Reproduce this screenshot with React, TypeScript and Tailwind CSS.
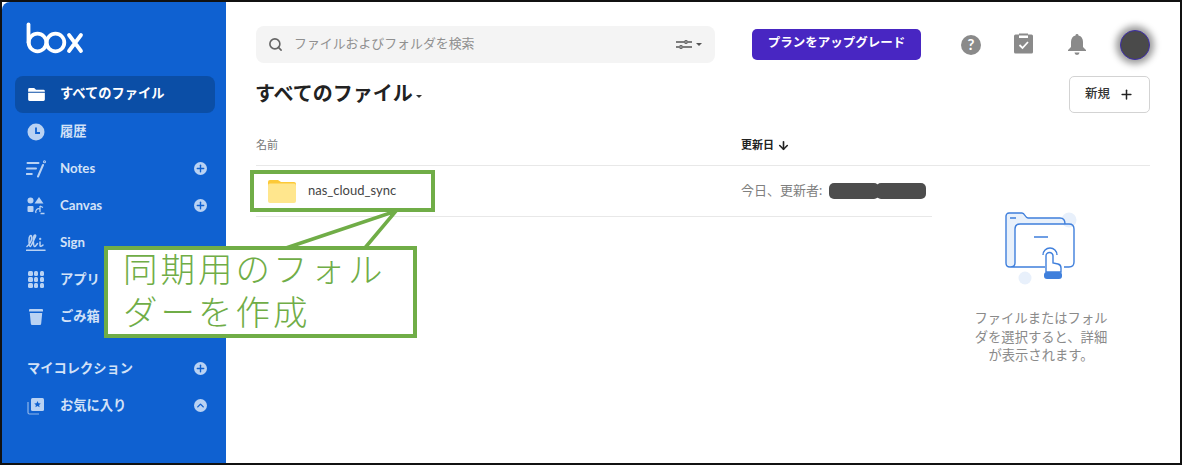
import { Search, ChevronUp, Plus, ArrowDown } from 'lucide-react'
import type { ReactNode } from 'react'

const font = 'font-["Lato","Noto_Sans_CJK_JP","Noto_Sans",sans-serif]'

const BoxLogo = () => (
  <svg width="58" height="32" viewBox="0 0 58 32" fill="none" stroke="#fff" strokeWidth="3.800" strokeLinecap="round">
    <path d="M2.500 2.500v18" />
    <circle cx="11.500" cy="20.500" r="8.800" />
    <circle cx="29.500" cy="20.500" r="8.800" />
    <path d="M43 13l12 16M55 13L43 29" />
  </svg>
)

const FolderIcon = () => (
  <svg width="17" height="13" viewBox="0 0 18 14" fill="#fff">
    <path d="M1.500 0h5l2 2h8A1.500 1.500 0 0 1 18 3.500V4H0V1.500A1.500 1.500 0 0 1 1.500 0Z" />
    <path d="M0 5h18v7.500a1.500 1.500 0 0 1-1.500 1.500h-15A1.500 1.500 0 0 1 0 12.500Z" />
  </svg>
)

const ClockIcon = () => (
  <svg width="18" height="18" viewBox="0 0 18 18">
    <circle cx="9" cy="9" r="8.500" fill="#b9d2f3" />
    <path d="M9 4.500V10h4" fill="none" stroke="#0f61d1" strokeWidth="1.800" />
  </svg>
)

const NotesIcon = () => (
  <svg width="20" height="18" viewBox="0 0 20 18" fill="none" stroke="#b9d2f3" strokeWidth="2" strokeLinecap="round">
    <path d="M1.500 3h11M1 8.500h9M.8 14h5M17 5l-5 11.500" />
    <circle cx="18.500" cy="1.800" r="0.500" />
  </svg>
)

const CanvasIcon = () => (
  <svg width="18" height="18" viewBox="0 0 18 18" fill="#b9d2f3">
    <circle cx="3.500" cy="3.500" r="3" />
    <path d="M12 0l4.500 6.500h-9Z" />
    <rect x="0.500" y="9" width="6" height="6" rx="1" />
    <path d="M9 16a3 3 0 0 1 4-4M13 9v6M13 9l3 1.500M13.500 16.500h4" fill="none" stroke="#b9d2f3" strokeWidth="1.300" />
  </svg>
)

const SignIcon = () => (
  <svg width="20" height="18" viewBox="0 0 20 18" fill="none" stroke="#b9d2f3" strokeWidth="1.500" strokeLinecap="round">
    <path d="M1 12.500c3-2 5.500-7.500 4.500-10.500C4.800.5 3 2 3 6c0 3 0 6.500 1.200 6.500S8 5 9.500 2.500c.8-1.800-1.500-2.500-2 1-.4 3 0 9 1 9s2-1.500 3-3" />
    <path d="M14 8v3.500c0 1.200 1.500 1.200 3-.5" />
    <circle cx="14.200" cy="5" r="0.400" />
    <path d="M0.500 16.300h18.500" />
  </svg>
)

const AppsIcon = () => (
  <div className="grid w-[16px] grid-cols-3 gap-[1.500px]">
    {Array.from({ length: 9 }).map((_, i) => (
      <span key={i} className="size-[4.500px] rounded-[1.500px] bg-[#b9d2f3]" />
    ))}
  </div>
)

const TrashIcon = () => (
  <svg width="14" height="16" viewBox="0 0 14 16" fill="#b9d2f3">
    <path d="M0 1a1 1 0 0 1 1-1h12a1 1 0 0 1 1 1v1.500H0Z" />
    <path d="M.8 4h12.400l-1 10.500a1.500 1.500 0 0 1-1.500 1.500H3.300a1.500 1.500 0 0 1-1.500-1.500Z" />
  </svg>
)

const FavIcon = () => (
  <svg width="18" height="18" viewBox="0 0 18 18">
    <path d="M1 5v10.500A1.500 1.500 0 0 0 2.500 17H12" fill="none" stroke="#8fb6ea" strokeWidth="1.200" />
    <rect x="4" y="1" width="13" height="13" rx="1.500" fill="#b9d2f3" />
    <path d="M10.500 4l1 2.200 2.300.2-1.700 1.500.5 2.300-2.100-1.200-2.100 1.200.5-2.300-1.700-1.500 2.300-.2Z" fill="#0f61d1" />
  </svg>
)

const RoundBtn = ({ up }: { up?: boolean }) => (
  <span className="ml-auto flex size-[13px] items-center justify-center rounded-full bg-[#b9d2f3] text-[#0f61d1]">
    {up ? <ChevronUp size={11} strokeWidth={3} /> : <Plus size={11} strokeWidth={3} />}
  </span>
)

const items: { label: string; icon: ReactNode; action?: boolean; active?: boolean }[] = [
  { label: 'すべてのファイル', icon: <FolderIcon />, active: true },
  { label: '履歴', icon: <ClockIcon /> },
  { label: 'Notes', icon: <NotesIcon />, action: true },
  { label: 'Canvas', icon: <CanvasIcon />, action: true },
  { label: 'Sign', icon: <SignIcon /> },
  { label: 'アプリ', icon: <AppsIcon /> },
  { label: 'ごみ箱', icon: <TrashIcon /> },
]

const NavRow = ({ label, icon, action, active, up }: { label: string; icon: ReactNode; action?: boolean; active?: boolean; up?: boolean }) => (
  <div className={`flex h-[37px] items-center rounded-lg pl-[11px] pr-[8px] ${active ? 'bg-[#0b4ea6] text-white' : 'text-[#d3e2f7]'}`}>
    <span className="flex w-[20px] justify-center">{icon}</span>
    <span className={`ml-[14px] text-[13.250px] font-bold ${active ? 'pb-[1px]' : ''}`}>{label}</span>
    {action && <RoundBtn up={up} />}
  </div>
)

const Sidebar = () => (
  <aside className="flex w-[224px] shrink-0 flex-col rounded-tl-lg bg-[#0f61d1] pl-[13px] pr-[11px] pt-[20px]">
    <div className="ml-[11px] h-[54px]">
      <BoxLogo />
    </div>
    {items.map((item) => (
      <NavRow key={item.label} {...item} />
    ))}
    <div className="mt-[15px] flex h-[37px] items-center pl-[12px] pr-[8px] text-[#d3e2f7]">
      <span className="text-[13.250px] font-bold">マイコレクション</span>
      <RoundBtn />
    </div>
    <NavRow label="お気に入り" icon={<FavIcon />} action up />
  </aside>
)

const Caret = () => <span className="inline-block border-x-[3px] border-t-[3px] border-x-transparent border-t-current" />

const FilterIcon = () => (
  <svg width="16" height="9" viewBox="0 0 16 9" fill="none" stroke="#555" strokeWidth="1.300">
    <path d="M0 2h8M12 2h4M0 7h3M7 7h9" />
    <circle cx="10" cy="2" r="1.300" />
    <circle cx="5" cy="7" r="1.300" />
  </svg>
)

const TopBar = () => (
  <div className="flex h-[37px] items-center">
    <div className="flex h-[37px] w-[459px] items-center rounded-lg bg-[#f4f4f4] pl-[12px] pr-[13px] text-[#909090]">
      <Search size={15} strokeWidth={2.600} className="text-[#666]" />
      <span className="ml-[11px] flex-1 pb-[1px] text-[12.900px]">ファイルおよびフォルダを検索</span>
      <FilterIcon />
      <span className="ml-[4px] flex text-[#555]">
        <Caret />
      </span>
    </div>
    <button className="ml-[37px] flex h-[31px] w-[169px] items-center justify-center rounded-[5px] bg-[#4826c2] pb-[2px] text-[12.500px] font-bold text-white">
      プランをアップグレード
    </button>
    <div className="ml-[40px] flex size-[20px] items-center justify-center rounded-full bg-[#8a8a8a] pb-[1px] text-[15px] font-bold text-white">?</div>
    <svg className="ml-[33px] mb-[3px]" width="19" height="22" viewBox="0 0 19 21">
      <path d="M1.500 2H5V1h9v1h3.500A1.500 1.500 0 0 1 19 3.500v16a1.500 1.500 0 0 1-1.500 1.500h-16A1.500 1.500 0 0 1 0 19.500v-16A1.500 1.500 0 0 1 1.500 2Z" fill="#8a8a8a" />
      <path d="M5 3h9v2.500H5Z" fill="#fff" />
      <path d="M5.500 12.500l3 3 5.500-6" fill="none" stroke="#fff" strokeWidth="1.800" />
    </svg>
    <svg className="ml-[35px]" width="18" height="21" viewBox="0 0 18 21" fill="#8a8a8a">
      <path d="M9 0a1.500 1.500 0 0 1 1.500 1.600C13.500 2.300 15 5 15 8v5l3 3v1H0v-1l3-3V8c0-3 1.500-5.700 4.500-6.400A1.500 1.500 0 0 1 9 0Z" />
      <path d="M6.500 18.500h5a2.500 2.500 0 0 1-5 0Z" />
    </svg>
    <div className="ml-[34px] size-[30px] rounded-full border-[1.500px] border-[#3f2ea8] bg-[#4a4a4a] shadow-[0_0_7px_4px_rgba(0,0,0,0.4)]" />
  </div>
)

const EmptyArt = () => (
  <svg className="ml-[4px]" width="76" height="76" viewBox="0 0 76 76" fill="none">
    <circle cx="64" cy="8" r="7.500" fill="#e8f0fb" />
    <circle cx="20" cy="66" r="6.500" fill="#e8f0fb" />
    <path d="M1 4a3 3 0 0 1 3-3h13c3 0 3 5 6 5h32c3 0 5 2 5 6H14c-3 0-4 2-4 5v34c0 2-2 3-4 3s-5-1-5-4Z" fill="#e9f1fb" />
    <path d="M5 55c-3 0-4-2-4-4V4a3 3 0 0 1 3-3h13c3 0 3 5 6 5h32c3 0 5 2 5 6" stroke="#3f7fdc" strokeWidth="1.400" />
    <path d="M5 55c3 0 5-1 5-4V17c0-3 2-5 5-5h49c3 0 5 2 5 5v33c0 3-2 5-5 5h-5M6 55h34" stroke="#3f7fdc" strokeWidth="1.400" />
    <path d="M29 25h14M5 6h6" stroke="#3f7fdc" strokeWidth="1.400" />
    <path d="M41 60V44a3.500 3.500 0 0 1 7 0v7l5 1c2 .5 3 2 3 4v4Z" fill="#fff" stroke="#3f7fdc" strokeWidth="1.400" />
    <path d="M38 43a7 7 0 0 1 14 0" stroke="#3f7fdc" strokeWidth="1.400" />
    <rect x="39" y="60" width="18" height="7" rx="3" fill="#3f7fdc" />
  </svg>
)

const FileTable = () => (
  <div className="mt-[16px]">
    <div className="flex h-[37px] items-center border-b border-[#e8e8e8] pb-[4px] text-[11px]">
      <span className="w-[485px] text-[#767676]">名前</span>
      <span className="font-bold text-[#222]">更新日</span>
      <ArrowDown size={13} strokeWidth={3} className="ml-[3px] text-[#222]" />
    </div>
    <div className="flex">
      <div className="flex h-[51px] w-[676px] items-center border-b border-[#e8e8e8]">
        <svg className="ml-[12px]" width="28" height="23" viewBox="0 0 28 23">
          <path d="M2 0h8l3 2h13a2 2 0 0 1 2 2v4H0V2a2 2 0 0 1 2-2Z" fill="#fcc937" />
          <rect y="3.500" width="28" height="19.500" rx="2" fill="#ffe68d" />
        </svg>
        <span className="ml-[12px] w-[433px] text-[13px] text-[#444]">nas_cloud_sync</span>
        <span className="pb-[1px] text-[13px] text-[#808080]">今日、更新者:</span>
        <span className="ml-[7px] flex blur-[0.6px]">
          <span className="h-[16px] w-[50px] rounded-[5px] bg-[#4d4d4d]" />
          <span className="-ml-[3px] h-[16px] w-[50px] rounded-[5px] bg-[#4d4d4d]" />
        </span>
      </div>
      <div className="flex flex-1 flex-col items-center pt-[46px]">
        <EmptyArt />
        <p className="mt-[21px] w-[140px] text-center text-[13.300px] leading-[18.500px] text-[#8a8a8a]">
          ファイルまたはフォルダを選択すると、詳細が表示されます。
        </p>
      </div>
    </div>
  </div>
)

const Main = () => (
  <main className="flex-1 bg-white pl-[30px] pr-[30px] pt-[24px]">
    <TopBar />
    <div className="mt-[13px] flex h-[37px] items-center">
      <h1 className="-ml-[1px] pb-[3px] text-[20px] font-bold text-[#222]">すべてのファイル</h1>
      <span className="ml-[3px] mt-[3px] flex text-[#333]">
        <Caret />
      </span>
      <button className="ml-auto flex h-[37px] w-[81px] items-center justify-center gap-[9px] rounded-[5px] border border-[#d3d3d3] pb-[1px] text-[12.500px] font-medium text-[#333]">
        <span>新規</span>
        <Plus size={15} strokeWidth={2.400} className="text-[#222]" />
      </button>
    </div>
    <FileTable />
  </main>
)

// green annotations drawn over the screenshot
const Callouts = () => (
  <>
    <div className="absolute left-[250px] top-[170px] h-[42px] w-[185px] border-[4px] border-[#70ad47]" />
    <svg className="absolute left-[280px] top-[208px]" width="125" height="44" viewBox="0 0 125 44" fill="none">
      <path d="M3 41L116 3 84 41Z" fill="#fff" />
      <path d="M3 41L116 3 84 41" stroke="#70ad47" strokeWidth="3.500" />
    </svg>
    <div className="absolute left-[104px] top-[246px] h-[92px] w-[313px] border-[4px] border-[#70ad47] bg-white pl-[15px] text-[#70ad47]">
      <p className="-mt-[3px] text-[34.500px] font-light leading-[43px] tracking-[3px]">
        同期用のフォル
        <br />
        ダーを作成
      </p>
    </div>
  </>
)

export default function App() {
  return (
    <div className={`relative box-border flex h-[465px] w-[1182px] overflow-hidden border-2 border-[#111] bg-white ${font}`}>
      <Sidebar />
      <Main />
      <div className="absolute -left-[2px] -top-[2px]">
        <Callouts />
      </div>
    </div>
  )
}
